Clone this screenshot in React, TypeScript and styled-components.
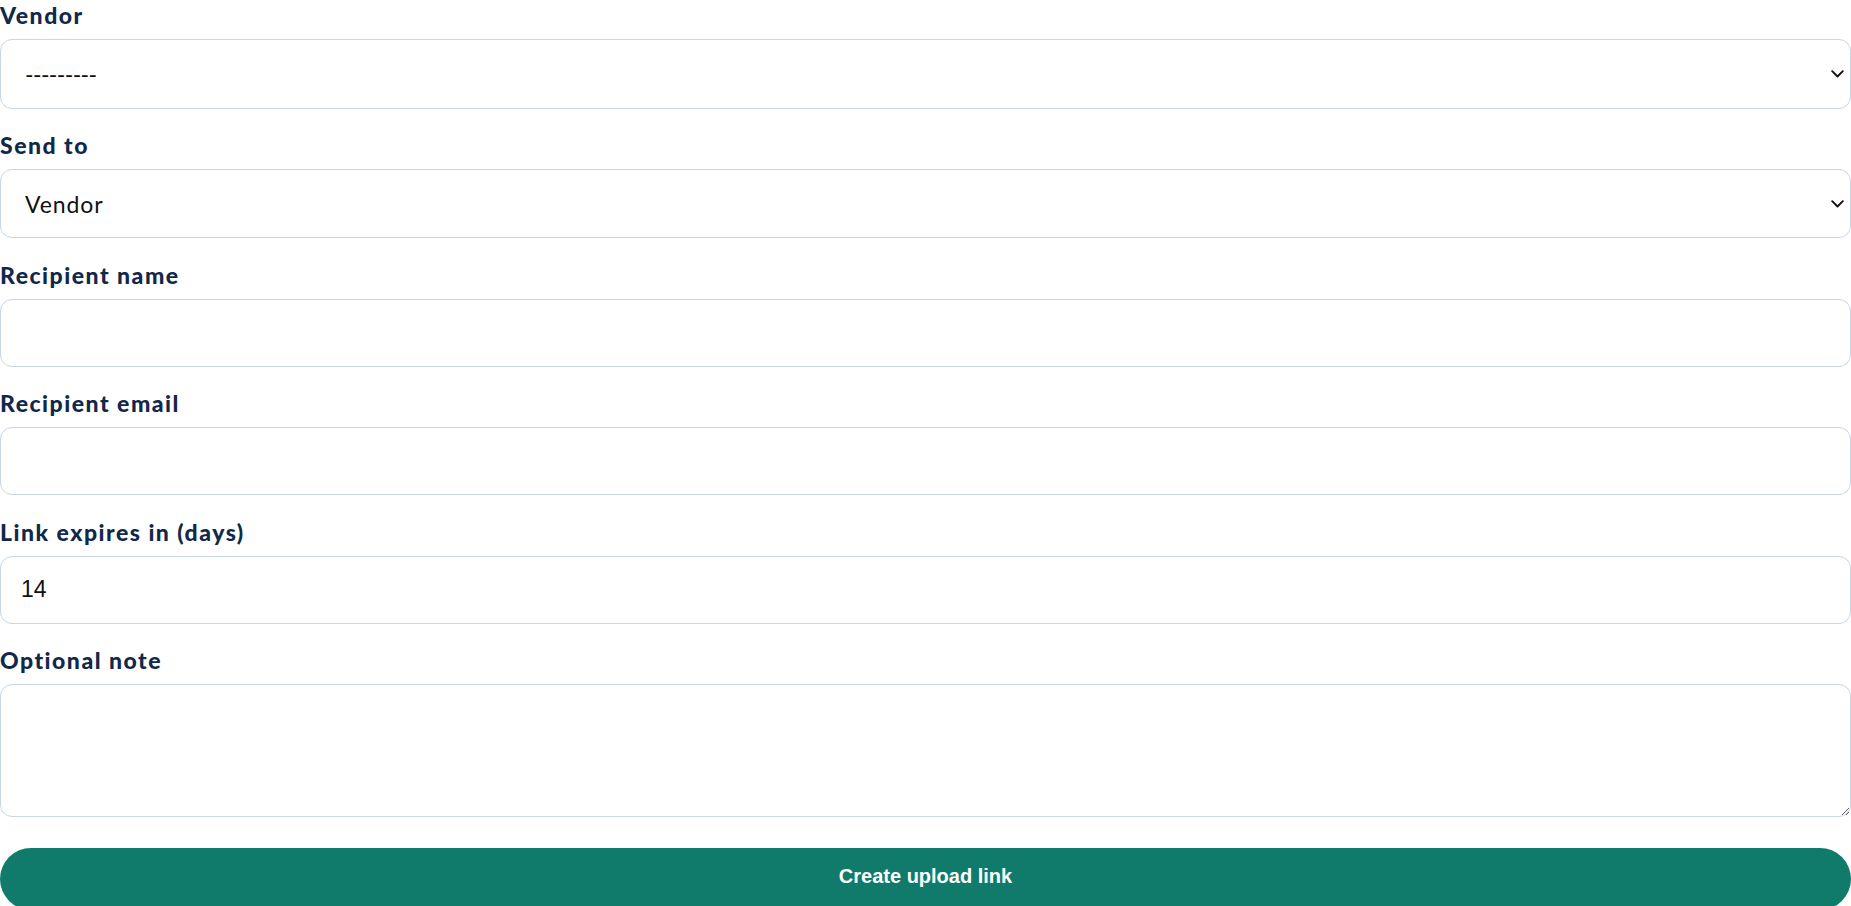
import React from "react";
import styled, { createGlobalStyle } from "styled-components";

const GlobalStyle = createGlobalStyle`
  html, body {
    margin: 0;
    padding: 0;
    background: #ffffff;
    overflow: hidden;
  }
  body {
    font-family: "Lato", "Liberation Sans", sans-serif;
  }
  * { box-sizing: border-box; }
`;

const Form = styled.form`
  display: flex;
  flex-direction: column;
  width: 100%;
`;

const Field = styled.div`
  display: flex;
  flex-direction: column;
  margin-bottom: 21.4px;
`;

const Label = styled.label`
  display: block;
  font-family: "Lato", "Liberation Sans", sans-serif;
  font-weight: 900;
  font-size: 23px;
  letter-spacing: 1.5px;
  line-height: 30px;
  color: #12284a;
  margin-bottom: 9px;
`;

const SelectWrap = styled.div`
  position: relative;
  width: 100%;
`;

const Select = styled.select<{ $tight?: boolean }>`
  appearance: none;
  -webkit-appearance: none;
  width: 100%;
  height: 69.5px;
  border: 1px solid #c9d6e4;
  border-radius: 12px;
  background: #ffffff;
  padding: 0 40px 0 24px;
  font-family: "Lato", "Liberation Sans", sans-serif;
  font-size: 23px;
  letter-spacing: ${(p) => (p.$tight ? "-0.6px" : "0.9px")};
  color: #111111;
  outline: none;
`;

const Chevron = styled.svg`
  position: absolute;
  right: 7px;
  top: 50%;
  width: 13px;
  height: 8px;
  transform: translateY(-50%);
  pointer-events: none;
`;

const Input = styled.input`
  width: 100%;
  height: 68px;
  border: 1px solid #c9d6e4;
  border-radius: 12px;
  background: #ffffff;
  padding: 0 20px;
  font-family: "Liberation Sans", Arial, sans-serif;
  font-size: 23px;
  color: #111111;
  outline: none;
`;

const TextArea = styled.textarea`
  width: 100%;
  height: 133px;
  border: 1px solid #c9d6e4;
  border-radius: 12px;
  background: #ffffff;
  padding: 16px 20px;
  font-family: "Liberation Sans", Arial, sans-serif;
  font-size: 22px;
  color: #111111;
  outline: none;
  display: block;
`;

const NoteField = styled(Field)`
  margin-bottom: 31px;
`;

const Button = styled.button`
  width: 100%;
  height: 62px;
  border: none;
  border-radius: 999px;
  background: #107b6b;
  color: #ffffff;
  font-family: "Liberation Sans", Arial, sans-serif;
  font-weight: 700;
  font-size: 20px;
  line-height: 22px;
  padding: 17px 0 23px;
  cursor: pointer;
`;

const SelectField: React.FC<{ label: string; id: string; value: string; options: string[]; tight?: boolean }> = ({
  label,
  id,
  value,
  options,
  tight,
}) => (
  <Field>
    <Label htmlFor={id}>{label}</Label>
    <SelectWrap>
      <Select id={id} defaultValue={value} $tight={tight}>
        {options.map((o) => (
          <option key={o} value={o}>
            {o}
          </option>
        ))}
      </Select>
      <Chevron viewBox="0 0 13 8" fill="none">
        <path d="M1.2 1.2 L6.5 6.5 L11.8 1.2" stroke="#111" strokeWidth="1.9" strokeLinecap="round" strokeLinejoin="round" />
      </Chevron>
    </SelectWrap>
  </Field>
);

const TextField: React.FC<{ label: string; id: string; value?: string; type?: string }> = ({
  label,
  id,
  value,
  type = "text",
}) => (
  <Field>
    <Label htmlFor={id}>{label}</Label>
    <Input id={id} type={type} defaultValue={value} />
  </Field>
);

export default function App() {
  return (
    <>
      <GlobalStyle />
      <Form onSubmit={(e) => e.preventDefault()}>
        <SelectField label="Vendor" id="vendor" value="---------" options={["---------"]} tight />
        <SelectField label="Send to" id="sendto" value="Vendor" options={["Vendor", "Other"]} />
        <TextField label="Recipient name" id="rname" />
        <TextField label="Recipient email" id="remail" type="email" />
        <TextField label="Link expires in (days)" id="expires" value="14" />
        <NoteField>
          <Label htmlFor="note">Optional note</Label>
          <TextArea id="note" />
        </NoteField>
        <Button type="submit">Create upload link</Button>
      </Form>
    </>
  );
}
